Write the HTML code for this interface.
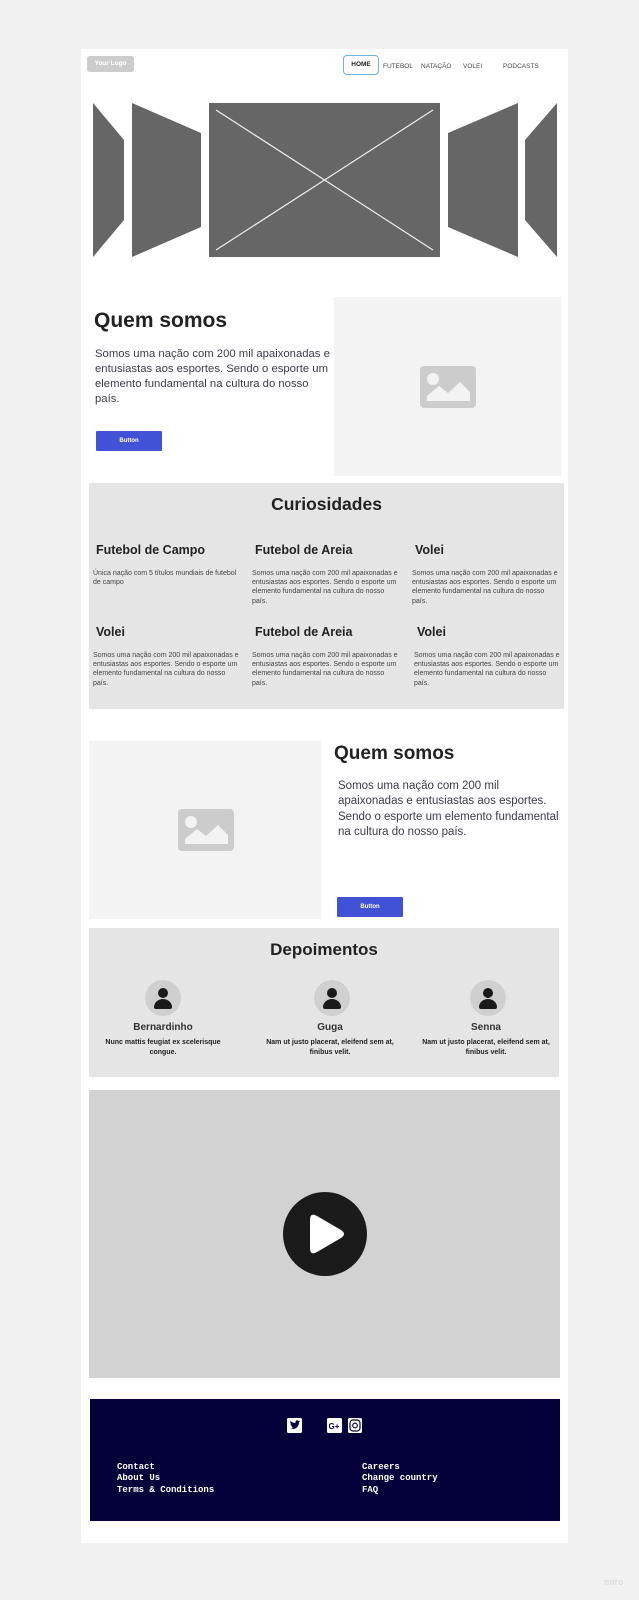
<!DOCTYPE html>
<html><head><meta charset="utf-8"><style>
*{margin:0;padding:0;box-sizing:border-box}
body{width:639px;height:1600px;background:#f1f1f1;position:relative;overflow:hidden;font-family:"Liberation Sans",sans-serif;color:#222}
.a{position:absolute}
.h{font-weight:bold;color:#222;white-space:nowrap}
.p{font-size:11.5px;line-height:15px;color:#3a3a4a}
.s{font-size:7px;line-height:9.2px;color:#444;white-space:nowrap}
.btn{background:#4152d6;color:#fff;font-size:6px;font-weight:bold;text-align:center;line-height:20px;border-radius:1px}
.nav{font-size:6.5px;color:#444;top:63px}
.ft{font-family:"Liberation Mono",monospace;font-weight:bold;font-size:9px;line-height:11.3px;color:#fff}
.av{width:36px;height:36px;border-radius:50%;background:#cfcfcf}
.nm{font-size:10px;font-weight:bold;color:#333;text-align:center;width:160px}
.tx{font-size:7px;font-weight:bold;color:#222;text-align:center;line-height:10px;width:140px}
</style></head><body>
<div class="a" style="left:81px;top:49px;width:487px;height:1494px;background:#fff"></div>
<div class="a" style="left:87px;top:56px;width:47px;height:16px;background:#ccc;border-radius:3px;color:#fff;font-size:6.5px;font-weight:bold;line-height:16px;text-align:center">Your Logo</div>
<div class="a" style="left:343px;top:55px;width:36px;height:20px;border:1.5px solid #6bb3dd;border-radius:4px;font-size:6.5px;font-weight:bold;line-height:17px;text-align:center;color:#222">HOME</div>
<div class="a nav" style="left:383px">FUTEBOL</div>
<div class="a nav" style="left:421px">NATAÇÃO</div>
<div class="a nav" style="left:463px">VOLEI</div>
<div class="a nav" style="left:503px">PODCASTS</div>
<svg class="a" style="left:0;top:0" width="639" height="300">
<g fill="#666">
<polygon points="93,103 124,140 124,220 93,257"/>
<polygon points="132,103 201,133 201,227 132,257"/>
<rect x="209" y="103" width="231" height="154"/>
<polygon points="448,133 518,103 518,257 448,227"/>
<polygon points="525,140 557,103 557,257 525,220"/>
</g>
<g stroke="#eee" stroke-width="1.2"><line x1="216" y1="110" x2="433" y2="250"/><line x1="433" y1="110" x2="216" y2="250"/></g>
</svg>
<div class="a h" style="left:94px;top:309px;font-size:21px">Quem somos</div>
<div class="a p" style="left:95px;top:347px;white-space:nowrap;font-size:11.3px">Somos uma nação com 200 mil apaixonadas e<br>entusiastas aos esportes. Sendo o esporte um<br>elemento fundamental na cultura do nosso<br>país.</div>
<div class="a btn" style="left:96px;top:431px;width:66px;height:20px">Button</div>
<div class="a" style="left:334px;top:297px;width:227px;height:179px;background:#f3f3f3"></div>
<svg class="a" style="left:420px;top:366px" width="56" height="42"><rect width="56" height="42" rx="4" fill="#ccc"/><circle cx="13" cy="13" r="6" fill="#f3f3f3"/><polygon points="7,35 7,30 19,20 28,27 40,16 50,26 50,35" fill="#f3f3f3"/></svg>
<div class="a" style="left:89px;top:483px;width:475px;height:226px;background:#e5e5e5"></div>
<div class="a h" style="left:89px;top:494px;width:475px;text-align:center;font-size:17.5px">Curiosidades</div>
<div class="a h" style="left:96px;top:543px;font-size:12.5px">Futebol de Campo</div>
<div class="a h" style="left:255px;top:543px;font-size:12.5px">Futebol de Areia</div>
<div class="a h" style="left:415px;top:543px;font-size:12.5px">Volei</div>
<div class="a s" style="left:93px;top:569px">Única nação com 5 títulos mundiais de futebol<br>de campo</div>
<div class="a s" style="left:252px;top:569px">Somos uma nação com 200 mil apaixonadas e<br>entusiastas aos esportes. Sendo o esporte um<br>elemento fundamental na cultura do nosso<br>país.</div>
<div class="a s" style="left:412px;top:569px">Somos uma nação com 200 mil apaixonadas e<br>entusiastas aos esportes. Sendo o esporte um<br>elemento fundamental na cultura do nosso<br>país.</div>
<div class="a h" style="left:96px;top:625px;font-size:12.5px">Volei</div>
<div class="a h" style="left:255px;top:625px;font-size:12.5px">Futebol de Areia</div>
<div class="a h" style="left:417px;top:625px;font-size:12.5px">Volei</div>
<div class="a s" style="left:93px;top:651px">Somos uma nação com 200 mil apaixonadas e<br>entusiastas aos esportes. Sendo o esporte um<br>elemento fundamental na cultura do nosso<br>país.</div>
<div class="a s" style="left:252px;top:651px">Somos uma nação com 200 mil apaixonadas e<br>entusiastas aos esportes. Sendo o esporte um<br>elemento fundamental na cultura do nosso<br>país.</div>
<div class="a s" style="left:414px;top:651px">Somos uma nação com 200 mil apaixonadas e<br>entusiastas aos esportes. Sendo o esporte um<br>elemento fundamental na cultura do nosso<br>país.</div>
<div class="a" style="left:89px;top:741px;width:232px;height:178px;background:#f3f3f3"></div>
<svg class="a" style="left:178px;top:809px" width="56" height="42"><rect width="56" height="42" rx="4" fill="#ccc"/><circle cx="13" cy="13" r="6" fill="#f3f3f3"/><polygon points="7,35 7,30 19,20 28,27 40,16 50,26 50,35" fill="#f3f3f3"/></svg>
<div class="a h" style="left:334px;top:743px;font-size:19px">Quem somos</div>
<div class="a p" style="left:338px;top:779px;width:225px;line-height:15.3px">Somos uma nação com 200 mil apaixonadas e entusiastas aos esportes. Sendo o esporte um elemento fundamental na cultura do nosso país.</div>
<div class="a btn" style="left:337px;top:897px;width:66px;height:20px">Button</div>
<div class="a" style="left:89px;top:928px;width:470px;height:149px;background:#e5e5e5"></div>
<div class="a h" style="left:89px;top:940px;width:470px;text-align:center;font-size:17px">Depoimentos</div>
<div class="a av" style="left:145px;top:980px"></div>
<div class="a av" style="left:314px;top:980px"></div>
<div class="a av" style="left:470px;top:980px"></div>
<svg class="a" style="left:0;top:0" width="639" height="1100"><g fill="#1a1a1a">
<circle cx="163" cy="993" r="5"/><path d="M154 1007a9 8 0 0 1 18 0a2 2 0 0 1-2 2h-14a2 2 0 0 1-2-2z"/>
<circle cx="332" cy="993" r="5"/><path d="M323 1007a9 8 0 0 1 18 0a2 2 0 0 1-2 2h-14a2 2 0 0 1-2-2z"/>
<circle cx="488" cy="993" r="5"/><path d="M479 1007a9 8 0 0 1 18 0a2 2 0 0 1-2 2h-14a2 2 0 0 1-2-2z"/>
</g></svg>
<div class="a nm" style="left:83px;top:1022px">Bernardinho</div>
<div class="a nm" style="left:250px;top:1022px">Guga</div>
<div class="a nm" style="left:406px;top:1022px">Senna</div>
<div class="a tx" style="left:93px;top:1038px">Nunc mattis feugiat ex scelerisque congue.</div>
<div class="a tx" style="left:260px;top:1038px">Nam ut justo placerat, eleifend sem at, finibus velit.</div>
<div class="a tx" style="left:416px;top:1038px">Nam ut justo placerat, eleifend sem at, finibus velit.</div>
<div class="a" style="left:89px;top:1090px;width:471px;height:288px;background:#d2d2d2"></div>
<svg class="a" style="left:283px;top:1192px" width="84" height="84"><circle cx="42" cy="42" r="42" fill="#1b1b1b"/><path d="M27 28Q27 20 34 24L58 38Q64 42 58 46L34 60Q27 64 27 56Z" fill="#fff"/></svg>
<div class="a" style="left:90px;top:1399px;width:470px;height:122px;background:#03003a"></div>
<svg class="a" style="left:287px;top:1418px" width="80" height="15">
<rect x="0" y="0" width="15" height="15" rx="1.5" fill="#fff"/>
<path d="M3 10c2 1.5 6 1.5 8-2 1-1.5 1-3 1-4l1.3-1.3-1.6.3c-.6-1-2.6-1.2-3.2.6-.2.5 0 1 0 1.4C6.3 5 4.7 4 3.5 3c-.6 1.2 0 2.6 1 3.3L3.5 6c0 1.2 1 2 2 2.3l-1 .1c.4 1 1.2 1.4 2.2 1.4C5.6 10.5 4.4 10.5 3 10z" fill="#03003a"/>
<rect x="40" y="0" width="15" height="15" rx="1.5" fill="#fff"/>
<text x="41.5" y="11" font-family="Liberation Sans" font-weight="bold" font-size="8" fill="#03003a">G+</text>
<rect x="61" y="0" width="14" height="15" rx="1.5" fill="#fff"/>
<rect x="63" y="2" width="10" height="11" rx="3" fill="none" stroke="#03003a" stroke-width="1.2"/>
<circle cx="68" cy="7.5" r="2.3" fill="none" stroke="#03003a" stroke-width="1.1"/>
</svg>
<div class="a ft" style="left:117px;top:1462px">Contact<br>About Us<br>Terms &amp; Conditions</div>
<div class="a ft" style="left:362px;top:1462px">Careers<br>Change country<br>FAQ</div>
<div class="a" style="left:604px;top:1577px;font-size:9px;color:#ddd;font-weight:bold">miro</div>
</body></html>
